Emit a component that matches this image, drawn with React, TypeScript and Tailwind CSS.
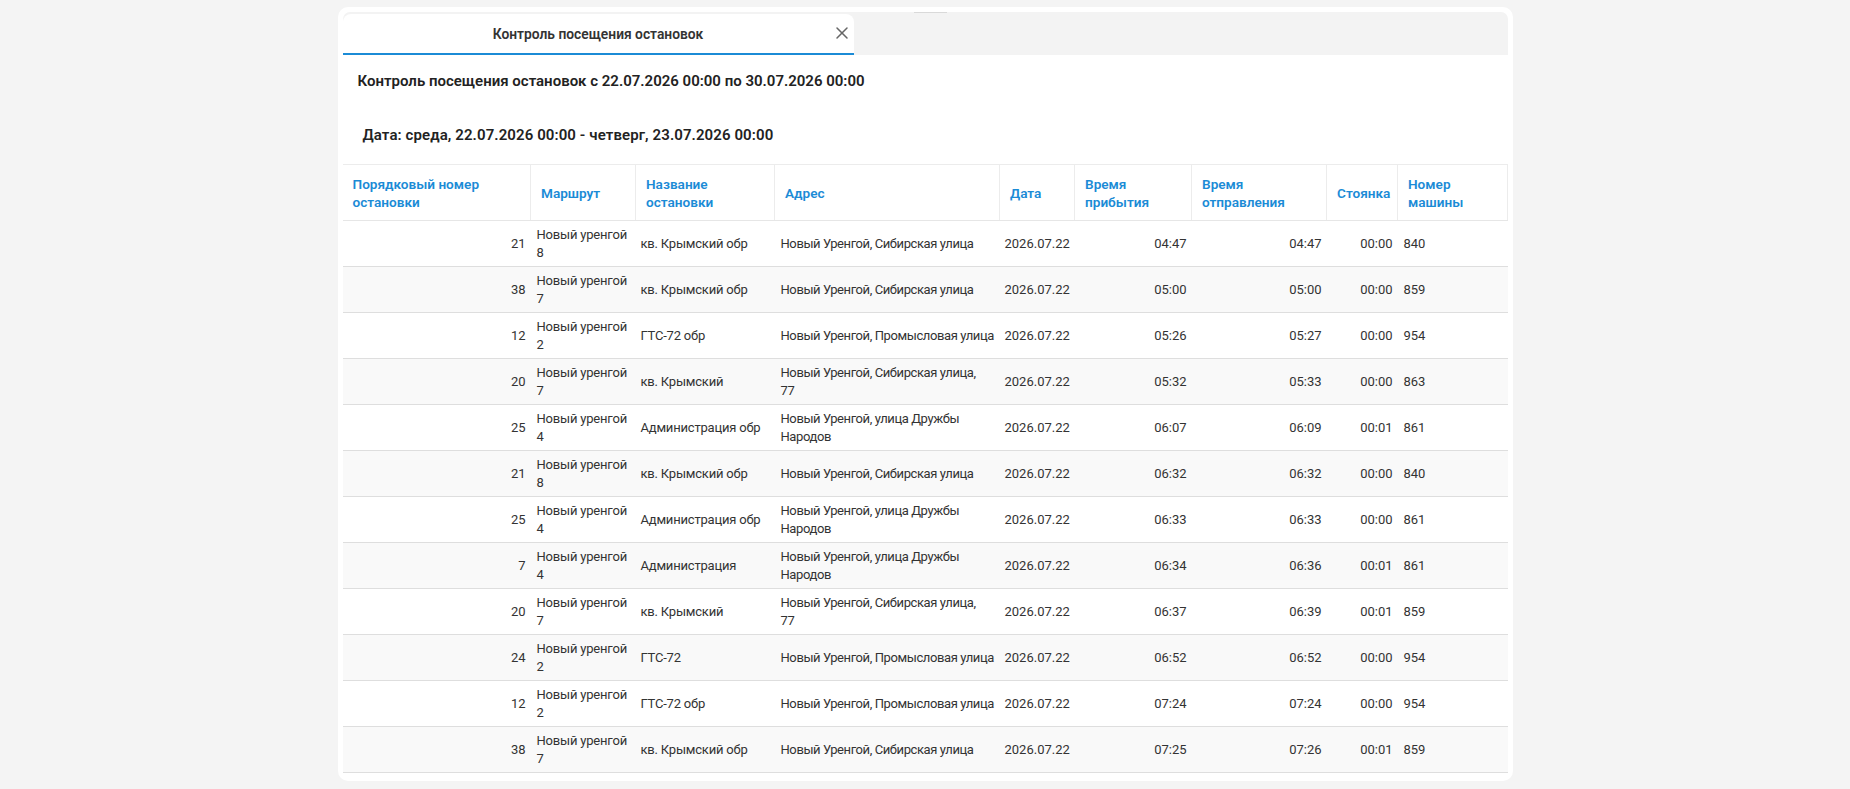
import React from "react";
import { X } from "lucide-react";

type Row = {
  n: string;
  route: string[];
  stop: string;
  addr: string[];
  date: string;
  arr: string;
  dep: string;
  park: string;
  car: string;
};

const SIB = ["Новый Уренгой, Сибирская улица"];
const SIB77 = ["Новый Уренгой, Сибирская улица,", "77"];
const PROM = ["Новый Уренгой, Промысловая улица"];
const DRUZ = ["Новый Уренгой, улица Дружбы", "Народов"];

const r = (n: string) => ["Новый уренгой", n];

const rows: Row[] = [
  { n: "21", route: r("8"), stop: "кв. Крымский обр", addr: SIB, date: "2026.07.22", arr: "04:47", dep: "04:47", park: "00:00", car: "840" },
  { n: "38", route: r("7"), stop: "кв. Крымский обр", addr: SIB, date: "2026.07.22", arr: "05:00", dep: "05:00", park: "00:00", car: "859" },
  { n: "12", route: r("2"), stop: "ГТС-72 обр", addr: PROM, date: "2026.07.22", arr: "05:26", dep: "05:27", park: "00:00", car: "954" },
  { n: "20", route: r("7"), stop: "кв. Крымский", addr: SIB77, date: "2026.07.22", arr: "05:32", dep: "05:33", park: "00:00", car: "863" },
  { n: "25", route: r("4"), stop: "Администрация обр", addr: DRUZ, date: "2026.07.22", arr: "06:07", dep: "06:09", park: "00:01", car: "861" },
  { n: "21", route: r("8"), stop: "кв. Крымский обр", addr: SIB, date: "2026.07.22", arr: "06:32", dep: "06:32", park: "00:00", car: "840" },
  { n: "25", route: r("4"), stop: "Администрация обр", addr: DRUZ, date: "2026.07.22", arr: "06:33", dep: "06:33", park: "00:00", car: "861" },
  { n: "7", route: r("4"), stop: "Администрация", addr: DRUZ, date: "2026.07.22", arr: "06:34", dep: "06:36", park: "00:01", car: "861" },
  { n: "20", route: r("7"), stop: "кв. Крымский", addr: SIB77, date: "2026.07.22", arr: "06:37", dep: "06:39", park: "00:01", car: "859" },
  { n: "24", route: r("2"), stop: "ГТС-72", addr: PROM, date: "2026.07.22", arr: "06:52", dep: "06:52", park: "00:00", car: "954" },
  { n: "12", route: r("2"), stop: "ГТС-72 обр", addr: PROM, date: "2026.07.22", arr: "07:24", dep: "07:24", park: "00:00", car: "954" },
  { n: "38", route: r("7"), stop: "кв. Крымский обр", addr: SIB, date: "2026.07.22", arr: "07:25", dep: "07:26", park: "00:01", car: "859" },
];

const headers: string[][] = [
  ["Порядковый номер", "остановки"],
  ["Маршрут"],
  ["Название", "остановки"],
  ["Адрес"],
  ["Дата"],
  ["Время", "прибытия"],
  ["Время", "отправления"],
  ["Стоянка"],
  ["Номер", "машины"],
];

const widths = [188, 105, 139, 225, 75, 117, 135, 71, 110];

function Lines({ lines }: { lines: string[] }) {
  return (
    <>
      {lines.map((l, i) => (
        <React.Fragment key={i}>
          {i > 0 && <br />}
          {l}
        </React.Fragment>
      ))}
    </>
  );
}

export default function App() {
  return (
    <div
      className="min-h-screen bg-[#f4f4f4] flex justify-center pt-[7px] pb-[8px]"
      style={{ fontFamily: "Roboto, 'Noto Sans', sans-serif" }}
    >
      <div className="w-[1175px] h-[774px] bg-white rounded-[10px] px-[5px] pt-[5px] flex flex-col overflow-hidden">
        {/* tab strip */}
        <div className="relative h-[43px] bg-[#f3f3f3] rounded-t-[7px] flex items-end shrink-0">
          <div className="absolute left-[571px] top-0 w-[33px] h-px bg-[#d9d9d9]" />
          <div className="relative w-[511px] h-[41px] bg-white rounded-t-[8px] border-b-2 border-[#1b8bd6] flex items-center justify-center">
            <span className="text-[13.8px] font-semibold text-[#333] pt-px">Контроль посещения остановок</span>
            <X className="absolute right-[2px] top-[9px] text-[#666]" size={20} strokeWidth={1.8} />
          </div>
        </div>

        <div className="pl-[15px] mt-[16px] text-[15px] leading-[20px] font-semibold text-[#222]">
          Контроль посещения остановок с 22.07.2026 00:00 по 30.07.2026 00:00
        </div>
        <div className="pl-[20px] mt-[34px] text-[15px] leading-[20px] font-semibold text-[#222] tracking-[0.1px]">
          Дата: среда, 22.07.2026 00:00 - четверг, 23.07.2026 00:00
        </div>

        <table className="mt-[19px] table-fixed border-collapse w-[1165px] text-[13px] leading-[18px] text-[#333]">
          <colgroup>
            {widths.map((w, i) => (
              <col key={i} style={{ width: w }} />
            ))}
          </colgroup>
          <thead>
            <tr className="h-[56px] border-t border-[#ececec]">
              {headers.map((h, i) => (
                <th
                  key={i}
                  className={
                    "text-left align-middle text-[13.6px] font-semibold text-[#1b8bd6] px-[10px] py-0 whitespace-nowrap border-b border-[#e6e6e6] " +
                    (i > 0 ? "border-l border-l-[#ececec] " : "") +
                    (i === headers.length - 1 ? "border-r border-r-[#ececec]" : "")
                  }
                >
                  <Lines lines={h} />
                </th>
              ))}
            </tr>
          </thead>
          <tbody>
            {rows.map((row, i) => (
              <tr key={i} className={"h-[46px] border-b border-[#dedede] " + (i % 2 === 1 ? "bg-[#f9f9f9]" : "bg-white")}>
                <td className="align-middle text-right px-[5px] py-0 whitespace-nowrap">{row.n}</td>
                <td className="align-middle px-[6px] py-0 whitespace-nowrap tracking-[-0.2px]">
                  <Lines lines={row.route} />
                </td>
                <td className="align-middle px-[5px] py-0 whitespace-nowrap tracking-[-0.2px]">{row.stop}</td>
                <td className="align-middle px-[6px] py-0 whitespace-nowrap tracking-[-0.4px]">
                  <Lines lines={row.addr} />
                </td>
                <td className="align-middle px-[5px] py-0 whitespace-nowrap">{row.date}</td>
                <td className="align-middle text-right px-[5px] py-0 whitespace-nowrap">{row.arr}</td>
                <td className="align-middle text-right px-[5px] py-0 whitespace-nowrap">{row.dep}</td>
                <td className="align-middle text-right px-[5px] py-0 whitespace-nowrap">{row.park}</td>
                <td className="align-middle px-[6px] py-0 whitespace-nowrap">{row.car}</td>
              </tr>
            ))}
          </tbody>
        </table>
      </div>
    </div>
  );
}
